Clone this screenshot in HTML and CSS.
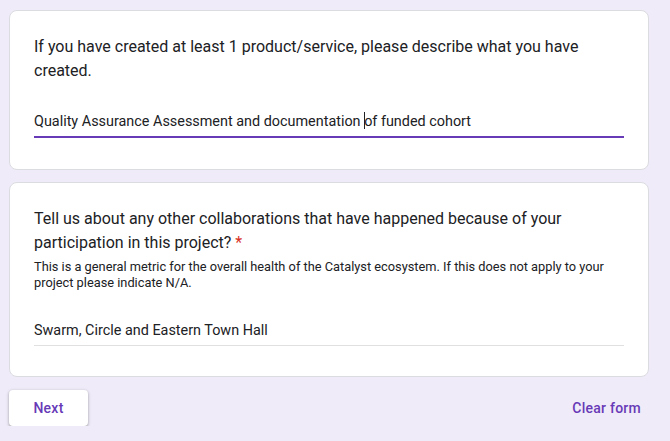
FILE: index.html
```html
<!DOCTYPE html>
<html>
<head>
<meta charset="utf-8">
<link rel="stylesheet" href="styles.css">
</head>
<body>
<div class="page">
  <div class="card">
    <div class="question">If you have created at least 1 product/service, please describe what you have created.</div>
    <div class="answer active">Quality Assurance Assessment and documentation <span class="caret"></span>of funded cohort</div>
  </div>
  <div class="card">
    <div class="question">Tell us about any other collaborations that have happened because of your participation in this project? <span class="req">*</span></div>
    <div class="desc">This is a general metric for the overall health of the Catalyst ecosystem. If this does not apply to your project please indicate N/A.</div>
    <div class="answer">Swarm, Circle and Eastern Town Hall</div>
  </div>
  <div class="actions">
    <button class="next">Next</button>
    <span class="clear">Clear form</span>
  </div>
</div>
</body>
</html>
```
FILE: styles.css
```css
html, body {
  margin: 0;
  padding: 0;
  background: #f0ebf8;
  font-family: Roboto, "Noto Sans", sans-serif;
  color: #202124;
}
.page {
  width: 640px;
  padding: 10px 0 0 9px;
  display: flex;
  flex-direction: column;
  gap: 12px;
}
.card {
  background: #fff;
  border: 1px solid #dadce0;
  border-radius: 8px;
  padding: 24px;
}
.question {
  font-size: 16px;
  line-height: 24px;
}
.req {
  color: #d93025;
}
.desc {
  font-size: 12.8px;
  line-height: 16px;
  margin-top: 4px;
}
.answer {
  font-size: 14.4px;
  line-height: 20px;
  padding-bottom: 4px;
  border-bottom: 1px solid #e0e0e0;
  margin-top: 30px;
  margin-bottom: 6px;
}
.answer.active {
  border-bottom: 2px solid #673ab7;
  margin-top: 29px;
  margin-bottom: 7px;
}
.caret {
  display: inline-block;
  width: 1px;
  height: 17px;
  background: #202124;
  vertical-align: -3px;
  margin-right: -1px;
}
.actions {
  display: flex;
  justify-content: space-between;
  align-items: center;
  margin-top: 1px;
}
.next {
  width: 79px;
  height: 36px;
  background: #fff;
  border: none;
  border-radius: 4px;
  box-shadow: 0 1px 2px rgba(60,64,67,.3), 0 1px 3px 1px rgba(60,64,67,.15);
  color: #673ab7;
  font-family: Roboto, sans-serif;
  font-size: 14px;
  font-weight: 500;
  letter-spacing: 0.25px;
}
.clear {
  color: #673ab7;
  font-size: 14px;
  font-weight: 500;
  letter-spacing: 0.25px;
  margin-right: 8px;
}
```
